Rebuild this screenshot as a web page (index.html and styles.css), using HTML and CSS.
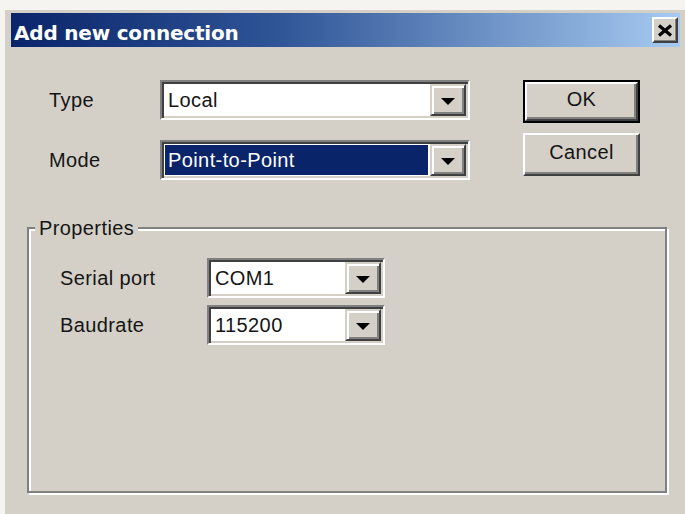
FILE: index.html
```html
<!DOCTYPE html>
<html>
<head>
<meta charset="utf-8">
<title>Add new connection</title>
<link rel="stylesheet" href="styles.css">
</head>
<body>
<div class="frame">
  <div class="titlebar">
    <span class="title">Add new connection</span>
    <button class="close" aria-label="Close">
      <svg width="16" height="13" viewBox="0 0 16 13"><path d="M2 1.5 L14 11.5 M14 1.5 L2 11.5" stroke="#000" stroke-width="3.2" fill="none"/></svg>
    </button>
  </div>
  <div class="content">
    <div class="top">
      <div class="form">
        <div class="row">
          <span class="label">Type</span>
          <div class="combo wide"><span class="value">Local</span><span class="drop"><i class="arrow"></i></span></div>
        </div>
        <div class="row">
          <span class="label">Mode</span>
          <div class="combo wide"><span class="value selected">Point-to-Point</span><span class="drop"><i class="arrow"></i></span></div>
        </div>
      </div>
      <div class="buttons">
        <button class="btn default"><span class="btn-face">OK</span></button>
        <button class="btn"><span class="btn-face">Cancel</span></button>
      </div>
    </div>
    <fieldset class="group">
      <legend class="legend">Properties</legend>
      <div class="group-rows">
        <div class="row">
          <span class="label sub">Serial port</span>
          <div class="combo narrow"><span class="value">COM1</span><span class="drop"><i class="arrow"></i></span></div>
        </div>
        <div class="row">
          <span class="label sub">Baudrate</span>
          <div class="combo narrow"><span class="value">115200</span><span class="drop"><i class="arrow"></i></span></div>
        </div>
      </div>
    </fieldset>
  </div>
</div>
</body>
</html>
```
FILE: styles.css
```css
html, body {
  margin: 0;
  padding: 0;
}

body {
  width: 685px;
  height: 514px;
  overflow: hidden;
  background: #f5f4f0;
  font-family: "Liberation Sans", Arial, sans-serif;
  font-size: 20px;
  letter-spacing: 0.4px;
  color: #151515;
}

/* window frame with light outer edge */
.frame {
  box-sizing: border-box;
  height: 514px;
  border-top: 10px solid #f5f4f0;
  border-left: 5px solid #f5f4f0;
  background: #d4d0c8;
  padding: 3px 5px 0 6px;
  display: flex;
  flex-direction: column;
}

/* caption bar */
.titlebar {
  height: 34px;
  flex: none;
  display: flex;
  align-items: center;
  justify-content: space-between;
  background: linear-gradient(to right, #0a246a 0%, #2f5597 40%, #a6caf0 100%);
}

.title {
  font-family: "DejaVu Sans", Verdana, sans-serif;
  font-weight: bold;
  font-size: 20px;
  color: #fff;
  padding-left: 3px;
  padding-top: 6px;
  letter-spacing: -0.2px;
}

.close {
  width: 26px;
  height: 26px;
  margin-right: 2px;
  padding: 0;
  display: flex;
  align-items: center;
  justify-content: center;
  background: #d4d0c8;
  border: 2px solid;
  border-color: #fff #404040 #404040 #fff;
  box-shadow: inset -1px -1px 0 #808080;
}

.content {
  flex: 1;
  display: flex;
  flex-direction: column;
}

.top {
  display: flex;
  padding: 33px 0 0 38px;
}

.form {
  display: flex;
  flex-direction: column;
  gap: 20px;
}

.row {
  display: flex;
  align-items: center;
  height: 40px;
}

.label {
  width: 111px;
  flex: none;
}

.label.sub {
  width: 147px;
}

/* sunken combo box */
.combo {
  box-sizing: border-box;
  height: 40px;
  display: flex;
  background: #fff;
  border: 2px solid;
  border-color: #808080 #fff #fff #808080;
  box-shadow: inset 2px 2px 0 #404040, inset -2px -2px 0 #d4d0c8;
  padding: 2px;
}

.combo.wide {
  width: 310px;
}

.combo.narrow {
  width: 178px;
}

.value {
  flex: 1;
  display: flex;
  align-items: center;
  padding-left: 3px;
  margin: 1px 2px 1px 1px;
}

.value.selected {
  background: #0a246a;
  color: #fff;
}

.drop {
  box-sizing: border-box;
  width: 36px;
  flex: none;
  display: flex;
  align-items: center;
  justify-content: center;
  background: #d4d0c8;
  border: 2px solid;
  border-color: #d4d0c8 #404040 #404040 #d4d0c8;
  box-shadow: inset 2px 2px 0 #fff, inset -2px -2px 0 #808080;
}

.arrow {
  width: 0;
  height: 0;
  border-left: 7px solid transparent;
  border-right: 7px solid transparent;
  border-top: 7px solid #000;
  margin-top: 2px;
}

.buttons {
  margin-left: 53px;
  width: 117px;
  display: flex;
  flex-direction: column;
  gap: 10px;
}

.btn {
  box-sizing: border-box;
  height: 43px;
  padding: 0;
  font: inherit;
  letter-spacing: inherit;
  color: #151515;
  background: #d4d0c8;
  border: 2px solid;
  border-color: #fff #404040 #404040 #fff;
  box-shadow: inset -2px -2px 0 #808080;
  display: flex;
}

.btn.default {
  border: 2px solid #000;
  box-shadow: none;
}

.btn-face {
  flex: 1;
  display: flex;
  align-items: center;
  justify-content: center;
  padding-bottom: 4px;
}

.btn.default .btn-face {
  border: 2px solid;
  border-color: #fff #404040 #404040 #fff;
  box-shadow: inset -2px -2px 0 #808080;
}

/* etched group box */
.group {
  flex: 1;
  margin: 37px 13px 21px 16px;
  padding: 19px 0 0 31px;
  border: 2px solid #808080;
  box-shadow: 2px 2px 0 #fff, inset 2px 2px 0 #fff;
  min-width: 0;
}

.legend {
  padding: 0 4px;
  margin-left: -25px;
  line-height: 22px;
  background: #d4d0c8;
}

.group-rows {
  display: flex;
  flex-direction: column;
  gap: 7px;
}
```
